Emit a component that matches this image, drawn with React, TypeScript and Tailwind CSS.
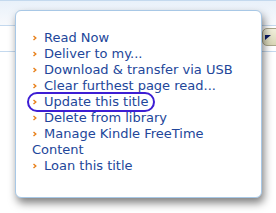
import React from 'react';

const items: string[] = [
  'Read Now',
  'Deliver to my...',
  'Download & transfer via USB',
  'Clear furthest page read...',
  'Update this title',
  'Delete from library',
  'Manage Kindle FreeTime Content',
  'Loan this title',
];

const Arrow: React.FC = () => (
  <svg width="12" height="8" viewBox="0 0 12 8" className="inline-block align-[0px]">
    <polyline points="1.5,2 3.8,4 1.5,6" fill="none" stroke="#e8801a" strokeWidth="1.4" />
  </svg>
);

const App: React.FC = () => {
  return (
    <div className="relative w-[276px] h-[213px] overflow-hidden bg-white font-['DejaVu_Sans',sans-serif]">
      {/* page behind the menu */}
      <div className="h-[26px] border-t border-b border-[#c4d9ee] bg-gradient-to-b from-[#e9f1fa] to-[#f7f9fc]" />
      <div className="h-[26px] border-b border-[#c4d9ee] flex justify-end items-start">
        <div className="mt-[2px] mr-[-12px] w-[26px] h-[18px] rounded-[5px] border border-[#a9a58a] bg-gradient-to-b from-[#f1efdc] to-[#d9d6b6] flex items-center pl-[2px]">
          <svg width="6" height="5" viewBox="0 0 6 5">
            <polygon points="0,0 6,0 0,5" fill="#0b1a66" />
          </svg>
        </div>
      </div>

      {/* popup menu */}
      <div className="absolute left-[15px] top-[10px] w-[247px] h-[188px] rounded-[6px] border border-[#a8c8e6] bg-white shadow-[2px_5px_9px_rgba(0,0,0,0.5)] pl-[16px] pr-[14px] pt-[19px]">
        <ul className="text-[13px] leading-[16px] text-[#22469a] w-[214px]">
          {items.map((item) => (
            <li key={item} className="relative">
              {item === 'Update this title' && (
                <span className="absolute left-[-5px] top-[-2px] w-[128px] h-[20px] rounded-full border-2 border-[#3d1ed4]" />
              )}
              <Arrow />
              {item}
            </li>
          ))}
        </ul>
      </div>
    </div>
  );
};

export default App;
